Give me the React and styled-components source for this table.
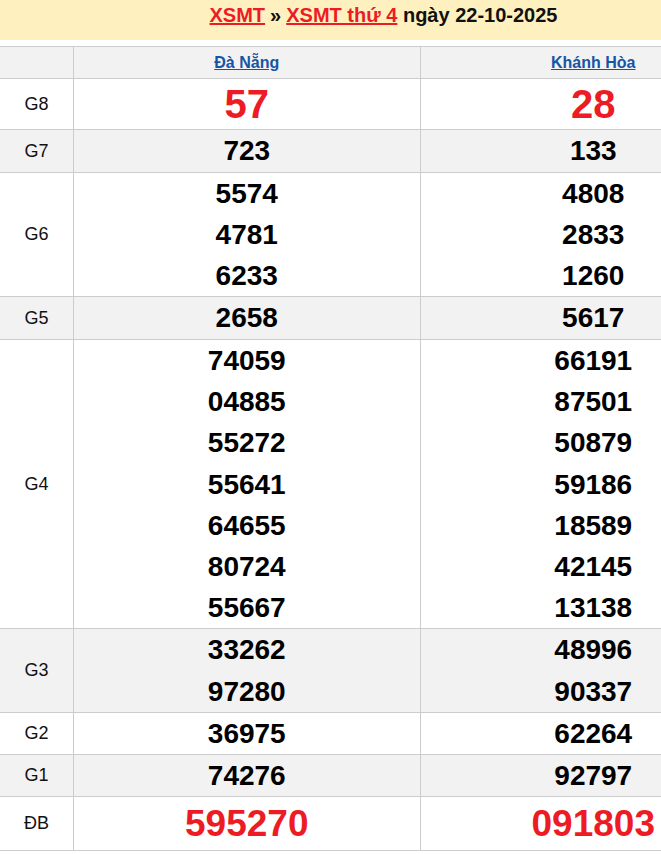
import styled, { createGlobalStyle } from "styled-components"

const GlobalStyle = createGlobalStyle`
    body {
        margin: 0;
        background: #fff;
        font-family: "Liberation Sans", Arial, sans-serif;
    }
`

const Page = styled.div`
    width: 767px;
`

const TitleBar = styled.div`
    height: 40px;
    background-color: #fef0bf;
    display: flex;
    justify-content: center;
    align-items: flex-start;
    padding-top: 4px;
    box-sizing: border-box;
    font-size: 20px;
    font-weight: bold;
    color: #111;
    line-height: 23px;
    margin-bottom: 6px;
`

const TitleLink = styled.a`
    color: #ed1c24;
    text-decoration: underline;
`

const Sep = styled.span`
    margin: 0 5px;
`

const Table = styled.table`
    width: 767px;
    border-collapse: collapse;
    table-layout: fixed;
`

const Row = styled.tr`
    background-color: ${p => (p.$shaded ? "#f2f2f2" : "#fff")};
`

const HeadCell = styled.th`
    height: 31px;
    border: 1px solid #cccccc;
    border-left: none;
    font-size: 16px;
    font-weight: bold;
    padding: 0;
    background-color: #f2f2f2;
    width: ${p => p.$w || "auto"};
`

const Province = styled.a`
    color: #1655a6;
    text-decoration: underline;
`

const Label = styled.td`
    border: 1px solid #cccccc;
    border-left: none;
    text-align: center;
    font-size: 18px;
    color: #111;
    padding: 0;
`

const Cell = styled.td`
    border: 1px solid #cccccc;
    text-align: center;
    padding: 0;
`

const Num = styled.div`
    font-weight: bold;
    font-size: ${p => p.$size || 28}px;
    line-height: ${p => p.$lh || 41}px;
    color: ${p => (p.$red ? "#ed1c24" : "#000")};
`

const prizes = [
    { name: "G8", a: ["57"], b: ["28"], size: 40, lh: 50, red: true },
    { name: "G7", a: ["723"], b: ["133"], lh: 42 },
    { name: "G6", a: ["5574", "4781", "6233"], b: ["4808", "2833", "1260"] },
    { name: "G5", a: ["2658"], b: ["5617"], lh: 42 },
    {
        name: "G4",
        a: ["74059", "04885", "55272", "55641", "64655", "80724", "55667"],
        b: ["66191", "87501", "50879", "59186", "18589", "42145", "13138"],
        lh: 41.2,
    },
    { name: "G3", a: ["33262", "97280"], b: ["48996", "90337"], lh: 41.5 },
    { name: "G2", a: ["36975"], b: ["62264"] },
    { name: "G1", a: ["74276"], b: ["92797"] },
    { name: "ĐB", a: ["595270"], b: ["091803"], size: 37, lh: 53, red: true },
]

const Numbers = ({ list, prize }) => (
    <Cell>
        {list.map((n, i) => (
            <Num key={i} $size={prize.size} $lh={prize.lh} $red={prize.red}>
                {n}
            </Num>
        ))}
    </Cell>
)

const App = () => {
    return (
        <Page>
            <GlobalStyle />
            <TitleBar>
                <TitleLink>XSMT</TitleLink>
                <Sep>»</Sep>
                <TitleLink>XSMT thứ 4</TitleLink>
                &nbsp;ngày 22-10-2025
            </TitleBar>
            <Table>
                <thead>
                    <tr>
                        <HeadCell $w="73px" />
                        <HeadCell>
                            <Province>Đà Nẵng</Province>
                        </HeadCell>
                        <HeadCell>
                            <Province>Khánh Hòa</Province>
                        </HeadCell>
                    </tr>
                </thead>
                <tbody>
                    {prizes.map((p, i) => (
                        <Row key={p.name} $shaded={i % 2 === 1}>
                            <Label>{p.name}</Label>
                            <Numbers list={p.a} prize={p} />
                            <Numbers list={p.b} prize={p} />
                        </Row>
                    ))}
                </tbody>
            </Table>
        </Page>
    )
}

export default App
